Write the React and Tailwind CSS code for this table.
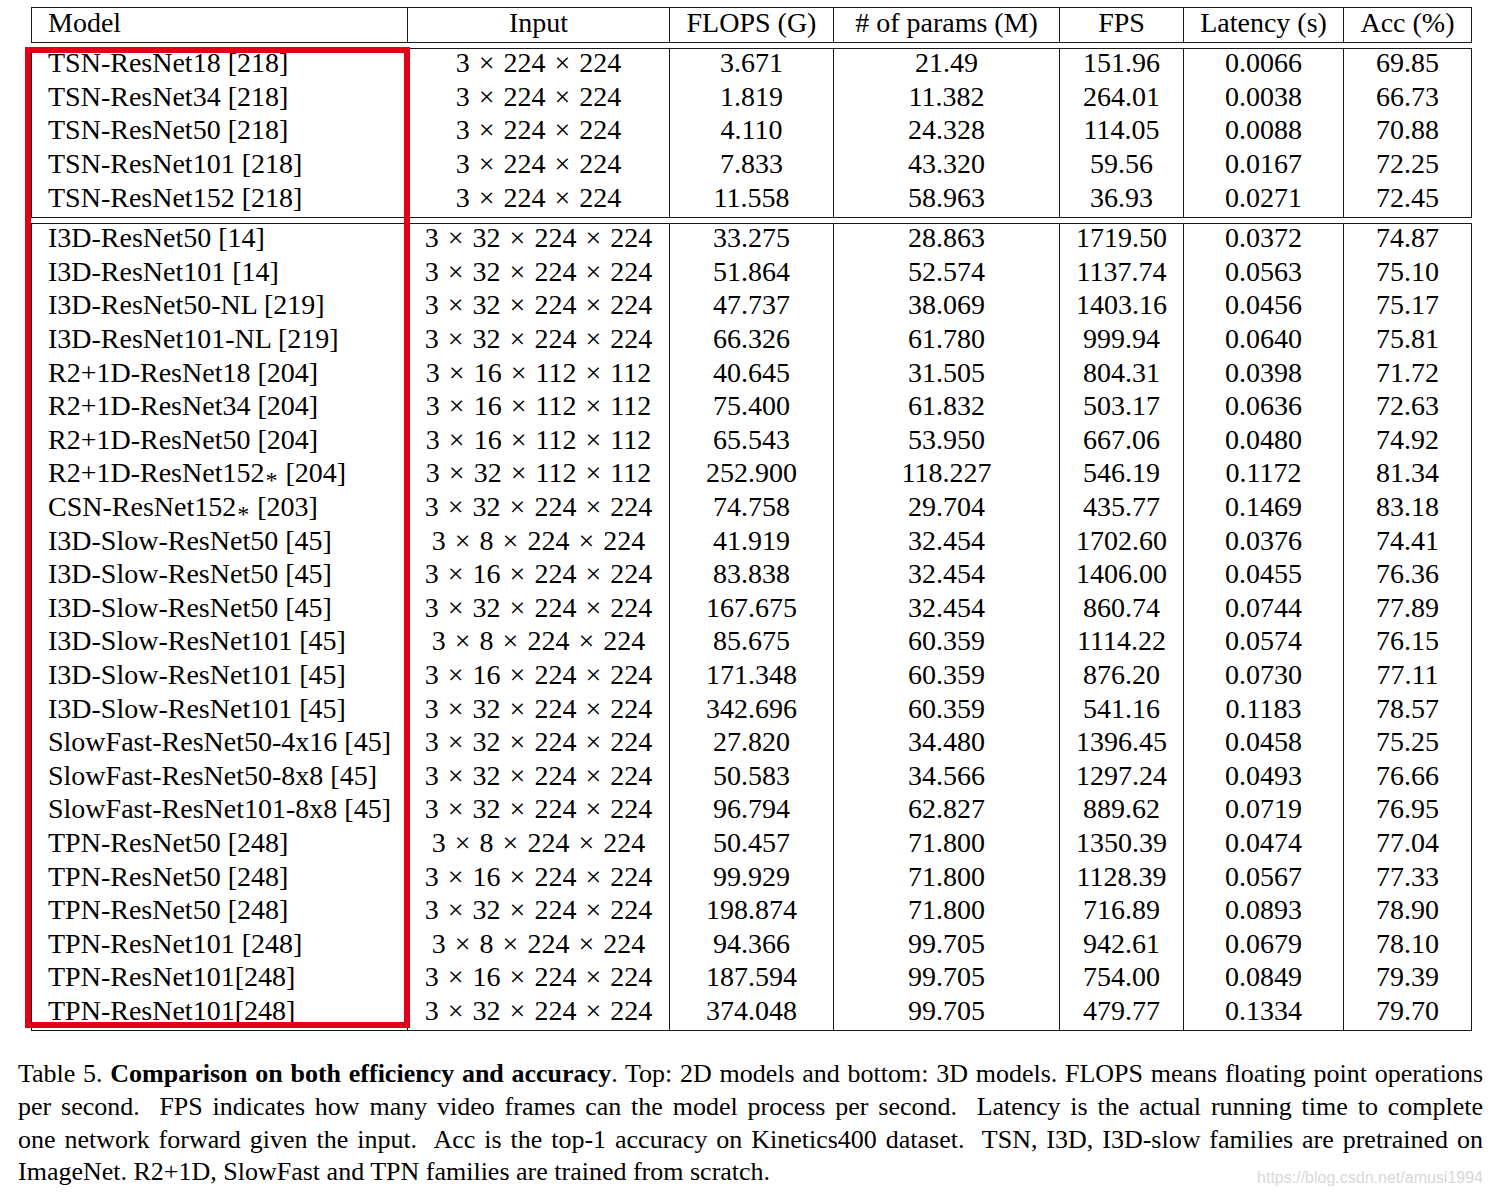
import React from "react";

const COLS = "grid grid-cols-[376px_262px_164px_226px_124px_160px_127px]";
const serif = { fontFamily: '"Liberation Serif", "Times New Roman", serif' };

const top = [
  ["TSN-ResNet18 [218]", "3 × 224 × 224", "3.671", "21.49", "151.96", "0.0066", "69.85"],
  ["TSN-ResNet34 [218]", "3 × 224 × 224", "1.819", "11.382", "264.01", "0.0038", "66.73"],
  ["TSN-ResNet50 [218]", "3 × 224 × 224", "4.110", "24.328", "114.05", "0.0088", "70.88"],
  ["TSN-ResNet101 [218]", "3 × 224 × 224", "7.833", "43.320", "59.56", "0.0167", "72.25"],
  ["TSN-ResNet152 [218]", "3 × 224 × 224", "11.558", "58.963", "36.93", "0.0271", "72.45"],
];

const bottom = [
  ["I3D-ResNet50 [14]", "3 × 32 × 224 × 224", "33.275", "28.863", "1719.50", "0.0372", "74.87"],
  ["I3D-ResNet101 [14]", "3 × 32 × 224 × 224", "51.864", "52.574", "1137.74", "0.0563", "75.10"],
  ["I3D-ResNet50-NL [219]", "3 × 32 × 224 × 224", "47.737", "38.069", "1403.16", "0.0456", "75.17"],
  ["I3D-ResNet101-NL [219]", "3 × 32 × 224 × 224", "66.326", "61.780", "999.94", "0.0640", "75.81"],
  ["R2+1D-ResNet18 [204]", "3 × 16 × 112 × 112", "40.645", "31.505", "804.31", "0.0398", "71.72"],
  ["R2+1D-ResNet34 [204]", "3 × 16 × 112 × 112", "75.400", "61.832", "503.17", "0.0636", "72.63"],
  ["R2+1D-ResNet50 [204]", "3 × 16 × 112 × 112", "65.543", "53.950", "667.06", "0.0480", "74.92"],
  ["R2+1D-ResNet152* [204]", "3 × 32 × 112 × 112", "252.900", "118.227", "546.19", "0.1172", "81.34"],
  ["CSN-ResNet152* [203]", "3 × 32 × 224 × 224", "74.758", "29.704", "435.77", "0.1469", "83.18"],
  ["I3D-Slow-ResNet50 [45]", "3 × 8 × 224 × 224", "41.919", "32.454", "1702.60", "0.0376", "74.41"],
  ["I3D-Slow-ResNet50 [45]", "3 × 16 × 224 × 224", "83.838", "32.454", "1406.00", "0.0455", "76.36"],
  ["I3D-Slow-ResNet50 [45]", "3 × 32 × 224 × 224", "167.675", "32.454", "860.74", "0.0744", "77.89"],
  ["I3D-Slow-ResNet101 [45]", "3 × 8 × 224 × 224", "85.675", "60.359", "1114.22", "0.0574", "76.15"],
  ["I3D-Slow-ResNet101 [45]", "3 × 16 × 224 × 224", "171.348", "60.359", "876.20", "0.0730", "77.11"],
  ["I3D-Slow-ResNet101 [45]", "3 × 32 × 224 × 224", "342.696", "60.359", "541.16", "0.1183", "78.57"],
  ["SlowFast-ResNet50-4x16 [45]", "3 × 32 × 224 × 224", "27.820", "34.480", "1396.45", "0.0458", "75.25"],
  ["SlowFast-ResNet50-8x8 [45]", "3 × 32 × 224 × 224", "50.583", "34.566", "1297.24", "0.0493", "76.66"],
  ["SlowFast-ResNet101-8x8 [45]", "3 × 32 × 224 × 224", "96.794", "62.827", "889.62", "0.0719", "76.95"],
  ["TPN-ResNet50 [248]", "3 × 8 × 224 × 224", "50.457", "71.800", "1350.39", "0.0474", "77.04"],
  ["TPN-ResNet50 [248]", "3 × 16 × 224 × 224", "99.929", "71.800", "1128.39", "0.0567", "77.33"],
  ["TPN-ResNet50 [248]", "3 × 32 × 224 × 224", "198.874", "71.800", "716.89", "0.0893", "78.90"],
  ["TPN-ResNet101 [248]", "3 × 8 × 224 × 224", "94.366", "99.705", "942.61", "0.0679", "78.10"],
  ["TPN-ResNet101[248]", "3 × 16 × 224 × 224", "187.594", "99.705", "754.00", "0.0849", "79.39"],
  ["TPN-ResNet101[248]", "3 × 32 × 224 × 224", "374.048", "99.705", "479.77", "0.1334", "79.70"],
];

const header = ["Model", "Input", "FLOPS (G)", "# of params (M)", "FPS", "Latency (s)", "Acc (%)"];

function renderModel(text) {
  if (!text.includes("*")) return text;
  const [a, b] = text.split("*");
  return (
    <span>
      {a}
      <span className="inline-block translate-y-[6px] px-[1px] text-[24px]">*</span>
      {b}
    </span>
  );
}

function renderInput(text) {
  const parts = text.split(" × ");
  const out = [];
  parts.forEach((p, i) => {
    if (i > 0)
      out.push(
        <span key={"x" + i} className="px-[9px]">
          ×
        </span>
      );
    out.push(<span key={"p" + i}>{p}</span>);
  });
  return <span>{out}</span>;
}

function Row({ cells, h }) {
  return (
    <div className={COLS}>
      {cells.map((c, i) => (
        <div
          key={i}
          className={
            (i === 0 ? "justify-start pl-[16px] " : "justify-center ") +
            (i < 6 ? "border-r border-[#1a1a1a] " : "") +
            (h ? "h-[34px] " : "h-[33.6px] ") +
            "flex items-center whitespace-nowrap pb-[5px] text-[28px] leading-none text-black"
          }
        >
          {h ? c : i === 0 ? renderModel(c) : i === 1 ? renderInput(c) : c}
        </div>
      ))}
    </div>
  );
}

function Section({ rows, className = "" }) {
  return (
    <div className={"border border-[#1a1a1a] " + className}>
      {rows.map((r, i) => (
        <Row key={i} cells={r} />
      ))}
    </div>
  );
}

export default function App() {
  return (
    <div className="relative h-[1196px] w-[1493px] bg-white" style={serif}>
      <div className="pt-[7px]">
        <div className="relative ml-[31px] w-[1441px]">
          <div className="border border-[#1a1a1a]">
            <Row cells={header} h />
          </div>
          <Section rows={top} className="mt-[5px]" />
          <Section rows={bottom} className="mt-[5px]" />
          <div className="pointer-events-none absolute left-[-6px] top-[40px] h-[981px] w-[385px] border-[6px] border-[#e30016]" />
        </div>
      </div>

      <div className="ml-[18px] mt-[27px] w-[1465px] text-[26px] leading-[32.7px] text-black">
        <div className="text-justify [text-align-last:justify]">
          Table 5. <b>Comparison on both efficiency and accuracy</b>. Top: 2D models and bottom: 3D models. FLOPS means floating point operations
        </div>
        <div className="text-justify [text-align-last:justify]">
          per second.&nbsp; FPS indicates how many video frames can the model process per second.&nbsp; Latency is the actual running time to complete
        </div>
        <div className="text-justify [text-align-last:justify]">
          one network forward given the input.&nbsp; Acc is the top-1 accuracy on Kinetics400 dataset.&nbsp; TSN, I3D, I3D-slow families are pretrained on
        </div>
        <div>ImageNet. R2+1D, SlowFast and TPN families are trained from scratch.</div>
      </div>

      <div
        className="absolute right-[10px] top-[1168px] text-[16px] leading-[20px] text-[#d8d8d8]"
        style={{ fontFamily: '"Liberation Sans", Arial, sans-serif' }}
      >
        https://blog.csdn.net/amusi1994
      </div>
    </div>
  );
}
